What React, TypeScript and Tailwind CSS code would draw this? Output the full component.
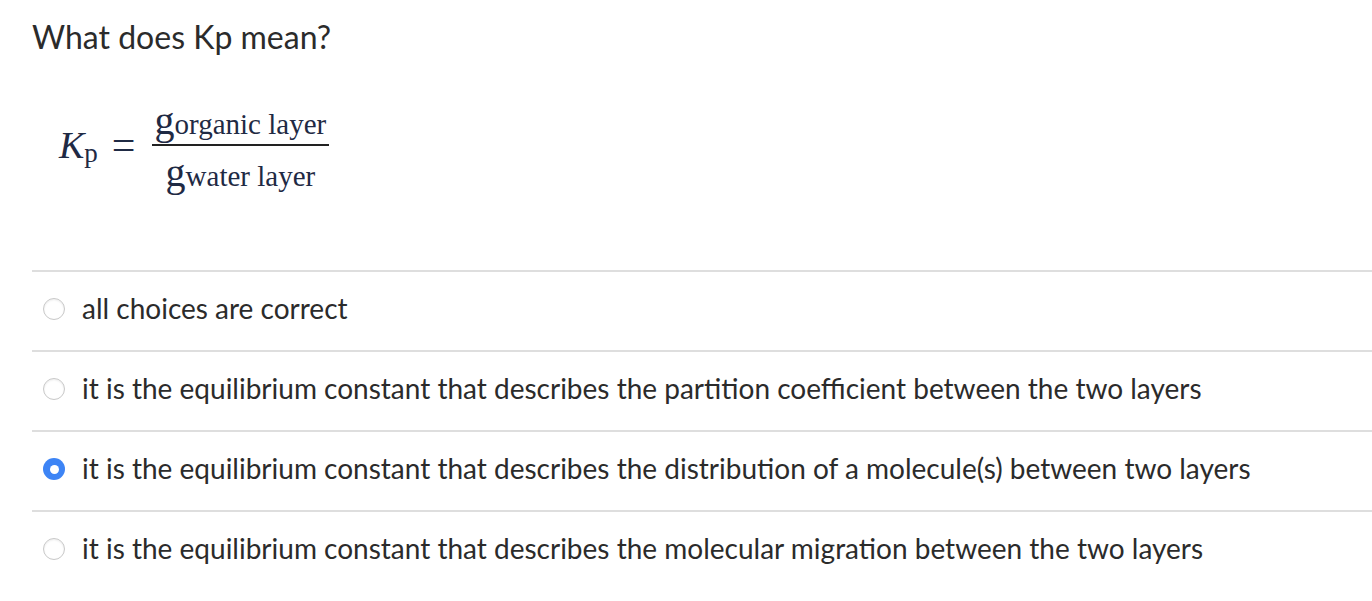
import React from 'react';

const options = [
  'all choices are correct',
  'it is the equilibrium constant that describes the partition coefficient between the two layers',
  'it is the equilibrium constant that describes the distribution of a molecule(s) between two layers',
  'it is the equilibrium constant that describes the molecular migration between the two layers',
];

const selected = 2;

function Radio({ checked }: { checked: boolean }) {
  if (checked) {
    return (
      <span className="flex h-[22px] w-[22px] items-center justify-center rounded-full bg-[#3d84f5]">
        <span className="h-[9px] w-[9px] rounded-full bg-white" />
      </span>
    );
  }
  return <span className="block h-[22px] w-[22px] rounded-full border border-[#c8c8c8] bg-white shadow-[inset_0_1px_2px_rgba(0,0,0,0.08)]" />;
}

export default function App() {
  return (
    <div className="min-h-screen bg-white pl-[32px] font-['Lato','Liberation_Sans',sans-serif]">
      <h1 className="pt-[18px] text-[32px] leading-[38px] text-[#2b2b2b]">What does Kp mean?</h1>

      {/* formula */}
      <div className="h-[214px] pl-[27px] pt-[44px] font-['Liberation_Serif',serif] text-[#1f2a44]">
        <div className="flex items-center">
          <span className="text-[38px] italic leading-none">K</span>
          <span className="mt-[16px] text-[27px] leading-none">p</span>
          <span className="ml-[14px] mr-[16px] text-[42px] leading-none">=</span>
          <div className="flex flex-col items-center">
            <div className="flex h-[44px] items-end px-[3px] pb-[8px]">
              <span className="text-[40px] leading-[30px]">g</span>
              <span className="relative top-[3px] text-[29px] leading-[30px]">organic layer</span>
            </div>
            <div className="h-[2px] w-full bg-[#222]" />
            <div className="flex h-[44px] items-end px-[3px] pb-[2px]">
              <span className="text-[40px] leading-[30px]">g</span>
              <span className="relative top-[3px] text-[29px] leading-[30px]">water layer</span>
            </div>
          </div>
        </div>
      </div>

      <div>
        {options.map((opt, i) => (
          <div key={i} className="flex h-[80px] items-center border-t-2 border-[#dedede] pb-[6px] pl-[11px]">
            <span className="mt-[2px]">
              <Radio checked={i === selected} />
            </span>
            <span className="ml-[17px] text-[28px] text-[#2b2b2b]">{opt}</span>
          </div>
        ))}
      </div>
    </div>
  );
}
